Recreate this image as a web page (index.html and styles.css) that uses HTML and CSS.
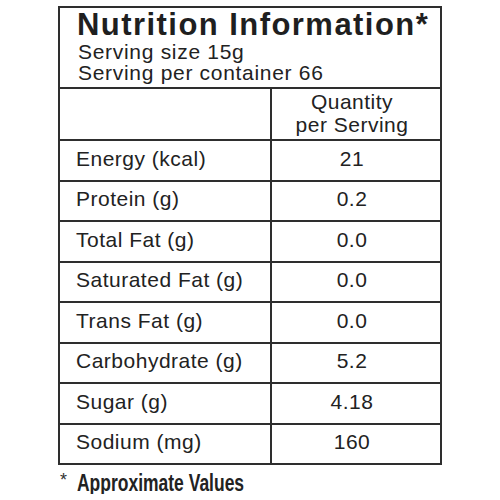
FILE: index.html
```html
<!DOCTYPE html>
<html lang="en">
<head>
<meta charset="UTF-8">
<meta name="viewport" content="width=device-width, initial-scale=1.0">
<title>Nutrition Information</title>
<link rel="stylesheet" href="styles.css">
</head>
<body>
<div class="label">
    <div class="panel">
        <div class="head">
            <h1>Nutrition Information*</h1>
            <p>Serving size 15g</p>
            <p>Serving per container 66</p>
        </div>
        <div class="row row-qty">
            <div class="name"></div>
            <div class="value">Quantity<br>per Serving</div>
        </div>
        <div class="row">
            <div class="name">Energy (kcal)</div>
            <div class="value">21</div>
        </div>
        <div class="row">
            <div class="name">Protein (g)</div>
            <div class="value">0.2</div>
        </div>
        <div class="row">
            <div class="name">Total Fat (g)</div>
            <div class="value">0.0</div>
        </div>
        <div class="row">
            <div class="name">Saturated Fat (g)</div>
            <div class="value">0.0</div>
        </div>
        <div class="row">
            <div class="name">Trans Fat (g)</div>
            <div class="value">0.0</div>
        </div>
        <div class="row">
            <div class="name">Carbohydrate (g)</div>
            <div class="value">5.2</div>
        </div>
        <div class="row">
            <div class="name">Sugar (g)</div>
            <div class="value">4.18</div>
        </div>
        <div class="row">
            <div class="name">Sodium (mg)</div>
            <div class="value">160</div>
        </div>
    </div>
    <div class="note"><span class="star">*</span><span class="note-text">Approximate Values</span></div>
</div>
</body>
</html>
```

FILE: styles.css
```css
body {
    margin: 0;
    padding: 0;
    background-color: #fff;
    font-family: "Liberation Sans", Arial, sans-serif;
    color: #222;
}
.label {
    width: 384px;
    margin: 6px 0 0 58px;
}
.panel {
    border: 2px solid #2e2e2e;
}
.head {
    padding: 2px 0 4px 18px;
    border-bottom: 2px solid #2e2e2e;
}
.head h1 {
    margin: 0 0 1px -1px;
    font-size: 31px;
    line-height: 30px;
    font-weight: bold;
    letter-spacing: 1.45px;
    color: #1f1f1f;
}
.head p {
    margin: 0;
    font-size: 21px;
    line-height: 21px;
    letter-spacing: 0.7px;
}
.row {
    display: flex;
    height: 40.5px;
    box-sizing: border-box;
    border-top: 2px solid #2e2e2e;
    font-size: 21px;
    letter-spacing: 0.5px;
}
.row:nth-child(2) {
    border-top: none;
}
.row-qty {
    height: 50px;
    line-height: 22.5px;
}
.name {
    width: 210px;
    padding: 0 0 3px 16px;
    box-sizing: border-box;
    display: flex;
    align-items: center;
}
.value {
    flex: 1;
    border-left: 2px solid #2e2e2e;
    padding: 0 8px 3px 0;
    display: flex;
    align-items: center;
    justify-content: center;
    text-align: center;
}
.row-qty .value {
    padding-bottom: 1px;
}
.note {
    margin-top: 4px;
    padding-left: 2px;
    font-size: 23px;
    line-height: 22px;
    color: #222;
}
.star {
    font-size: 18px;
    vertical-align: 5px;
    margin-right: 10px;
    color: #333;
}
.note-text {
    display: inline-block;
    font-weight: bold;
    transform: scaleX(0.76);
    transform-origin: left center;
}
```
